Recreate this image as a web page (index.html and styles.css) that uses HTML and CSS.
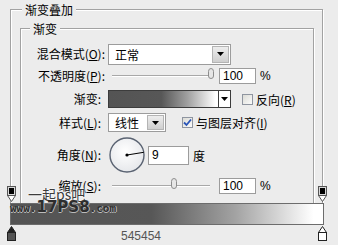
FILE: index.html
```html
<!DOCTYPE html>
<html lang="zh-CN">
  <head>
    <meta charset="utf-8" />
    <title>渐变叠加</title>
    <link rel="stylesheet" href="styles.css">
  </head>
  <body>
    <fieldset class="outer">
      <legend>渐变叠加</legend>
      <fieldset class="inner">
        <legend>渐变</legend>

        <div class="row r-blend">
          <span class="label">混合模式(<u>O</u>):</span>
          <div class="select blend">
            <span class="sel-text">正常</span>
            <span class="drop"><svg width="7" height="4" viewBox="0 0 7 4"><path d="M0 0H7L3.5 4Z" fill="#000"/></svg></span>
          </div>
        </div>

        <div class="row r-opacity">
          <span class="label">不透明度(<u>P</u>):</span>
          <div class="slider">
            <span class="track"></span>
            <span class="knob" style="left: 95px"><svg width="8" height="11" viewBox="0 0 8 11"><path d="M1.5 3.5Q1.5 0.5 4 0.5Q6.5 0.5 6.5 3.5V8Q6.5 10.5 4 10.5Q1.5 10.5 1.5 8Z" fill="#e6e6e6" stroke="#8c8c8c"/></svg></span>
          </div>
          <span class="num">100</span>
          <span class="unit">%</span>
        </div>

        <div class="row r-grad">
          <span class="label short">渐变:</span>
          <div class="grad-pick">
            <span class="grad-fill"></span>
            <span class="grad-drop"><svg width="7" height="4" viewBox="0 0 7 4"><path d="M0 0H7L3.5 4Z" fill="#000"/></svg></span>
          </div>
          <span class="check"></span>
          <span class="check-text">反向(<u>R</u>)</span>
        </div>

        <div class="row r-style">
          <span class="label short">样式(<u>L</u>):</span>
          <div class="select style">
            <span class="sel-text">线性</span>
            <span class="drop"><svg width="7" height="4" viewBox="0 0 7 4"><path d="M0 0H7L3.5 4Z" fill="#000"/></svg></span>
          </div>
          <span class="check on"><svg width="9" height="9" viewBox="0 0 9 9"><path d="M1 4.5L3.5 7L8 1.5" fill="none" stroke="#2a55b8" stroke-width="1.8"/></svg></span>
          <span class="check-text">与图层对齐(<u>I</u>)</span>
        </div>

        <div class="row r-angle">
          <span class="label short">角度(<u>N</u>):</span>
          <svg class="dial" width="38" height="38" viewBox="0 0 38 38">
            <defs>
              <radialGradient id="dialFill" cx="0.45" cy="0.4" r="0.7">
                <stop offset="0" stop-color="#ffffff"/>
                <stop offset="1" stop-color="#e2e4e8"/>
              </radialGradient>
            </defs>
            <circle cx="19" cy="19" r="17" fill="url(#dialFill)" stroke="#5a6372" stroke-width="1.4"/>
            <line x1="19" y1="19" x2="35.8" y2="16.3" stroke="#000" stroke-width="1"/>
            <circle cx="19" cy="19" r="1.6" fill="#000"/>
          </svg>
          <span class="num angle">9</span>
          <span class="unit">度</span>
        </div>

        <div class="row r-scale">
          <span class="label short">缩放(<u>S</u>):</span>
          <div class="slider">
            <span class="track"></span>
            <span class="knob" style="left: 58px"><svg width="8" height="11" viewBox="0 0 8 11"><path d="M1.5 3.5Q1.5 0.5 4 0.5Q6.5 0.5 6.5 3.5V8Q6.5 10.5 4 10.5Q1.5 10.5 1.5 8Z" fill="#e6e6e6" stroke="#8c8c8c"/></svg></span>
          </div>
          <span class="num">100</span>
          <span class="unit">%</span>
        </div>
      </fieldset>
    </fieldset>

    <div class="editor">
      <div class="stops top">
        <svg width="9" height="17" viewBox="0 0 9 17"><rect x="0.5" y="0.5" width="8" height="9" fill="#d8d8d8" stroke="#555"/><rect x="2" y="2" width="5" height="6" fill="#000"/><path d="M0.5 9.5H8.5L4.5 15.5Z" fill="#fff" stroke="#555"/></svg>
        <svg width="9" height="17" viewBox="0 0 9 17"><rect x="0.5" y="0.5" width="8" height="9" fill="#d8d8d8" stroke="#555"/><rect x="2" y="2" width="5" height="6" fill="#000"/><path d="M0.5 9.5H8.5L4.5 15.5Z" fill="#fff" stroke="#555"/></svg>
      </div>
      <div class="bar"></div>
      <div class="stops bottom">
        <svg width="9" height="17" viewBox="0 0 9 17"><path d="M0.5 7.5L4.5 1.5L8.5 7.5Z" fill="#222" stroke="#222"/><rect x="0.5" y="7.5" width="8" height="8" fill="#545454" stroke="#222"/></svg>
        <span class="hex">545454</span>
        <svg width="9" height="17" viewBox="0 0 9 17"><path d="M0.5 7.5L4.5 1.5L8.5 7.5Z" fill="#fff" stroke="#222"/><rect x="0.5" y="7.5" width="8" height="8" fill="#fff" stroke="#222"/></svg>
      </div>
      <div class="mark">一起ps吧</div>
      <div class="mark-url">www.<b>17PS8</b>.com</div>
    </div>
  </body>
</html>
```

FILE: styles.css
```css
html, body {
    margin: 0;
}

body {
    position: relative;
    width: 338px;
    height: 245px;
    overflow: hidden;
    background: #ececec;
    font-family: "Noto Sans CJK SC", sans-serif;
    font-size: 12px;
    color: #000;
}

fieldset {
    margin: 0;
    border: 1px solid #a2a2a2;
    box-shadow: 1px 1px 0 #fff, inset 1px 1px 0 #fff;
    box-sizing: border-box;
}

legend {
    background: #ececec;
    padding: 0 3px;
    line-height: 19px;
    height: 19px;
}

.outer {
    margin-left: 10px;
    width: 313px;
    height: 244px;
    padding: 0 8px 0 9px;
}

.outer > legend {
    margin-left: 2px;
}

.inner {
    height: 224px;
    padding: 5px 0 0 0;
}

.inner > legend {
    margin-left: 9px;
}

.row {
    display: flex;
    align-items: center;
}

.r-blend   { height: 22px; }
.r-opacity { height: 19px; margin-top: 1px; }
.r-grad    { height: 18px; margin-top: 5px; }
.r-style   { height: 19px; margin-top: 5px; }
.r-angle   { height: 38px; margin-top: 4px; }
.r-scale   { height: 19px; margin-top: 2px; }

.label {
    width: 84px;
    padding-right: 3px;
    text-align: right;
    white-space: nowrap;
    line-height: 14px;
}

.label.short {
    width: 80px;
    padding-right: 7px;
}

u {
    text-decoration-thickness: 1px;
    text-underline-offset: 1px;
}

.select {
    display: flex;
    height: 21px;
    box-sizing: border-box;
    border: 1px solid #9c9c9c;
    background: #fff;
}

.select.blend { width: 123px; }
.select.style { width: 58px; height: 19px; }

.sel-text {
    flex: 1;
    padding-left: 6px;
    line-height: 19px;
}

.style .sel-text {
    line-height: 17px;
}

.drop {
    display: flex;
    align-items: center;
    justify-content: center;
    width: 15px;
    margin: 1px;
    border: 1px solid #b4b4b4;
    background: linear-gradient(#ededed, #cfcfcf);
}

.slider {
    position: relative;
    width: 100px;
    height: 19px;
    margin-left: 4px;
}

.track {
    position: absolute;
    left: 0;
    right: 2px;
    top: 9px;
    height: 1px;
    background: #a8a8a8;
    border-bottom: 1px solid #fff;
}

.knob {
    position: absolute;
    top: 2px;
    line-height: 0;
}

.num {
    width: 37px;
    height: 16px;
    margin-left: 7px;
    box-sizing: border-box;
    border: 1px solid #9c9c9c;
    background: #fff;
    padding-left: 3px;
    font-family: "Liberation Sans", Arial, sans-serif;
    font-size: 12px;
    line-height: 14px;
}

.num.angle {
    width: 41px;
    height: 19px;
    margin-left: 2px;
    line-height: 17px;
}

.unit {
    margin-left: 4px;
    font-family: "Liberation Sans", "Noto Sans CJK SC", sans-serif;
}

.grad-pick {
    display: flex;
    width: 123px;
    height: 18px;
    box-sizing: border-box;
    border: 1px solid #3c3c3c;
    background: #fff;
}

.grad-fill {
    flex: 1;
    background: linear-gradient(to right, #545454 0%, #575757 48%, #a0a0a0 72%, #fff 98%);
    border-right: 1px solid #3c3c3c;
}

.grad-drop {
    display: flex;
    align-items: center;
    justify-content: center;
    width: 11px;
}

.check {
    display: flex;
    align-items: center;
    justify-content: center;
    width: 11px;
    height: 11px;
    margin-left: 11px;
    box-sizing: border-box;
    border: 1px solid #8f95a0;
    background: linear-gradient(135deg, #dcdcd6, #fbfbfb);
}

.r-style .check {
    margin-left: 16px;
}

.check-text {
    margin-left: 3px;
}

.dial {
    display: block;
}

/* gradient editor strip laid over the bottom of the dialog */
.editor {
    position: absolute;
    left: 0;
    top: 186px;
    width: 338px;
    height: 59px;
}

.stops {
    display: flex;
    align-items: flex-start;
    justify-content: space-between;
    padding: 0 11px 0 7px;
    height: 17px;
}

.stops svg {
    display: block;
}

.stops.bottom {
    height: 20px;
    justify-content: flex-start;
    background: #ececec;
}

.stops.bottom svg:last-child {
    margin-left: auto;
}

.bar {
    margin-left: 10px;
    width: 314px;
    height: 22px;
    box-sizing: border-box;
    border: 1px solid #6c6c6c;
    background: linear-gradient(to right, #545454 0%, #575757 45%, #a3a3a3 72%, #fff 97%);
    box-shadow: -10px 0 0 #ececec, 14px 0 0 #ececec;
}

.hex {
    margin: 5px 0 0 105px;
    font-family: "Liberation Sans", Arial, sans-serif;
    font-size: 12px;
    line-height: 12px;
    color: #555;
}

.mark {
    position: absolute;
    left: 28px;
    top: -2px;
    font-size: 14px;
    line-height: 20px;
    color: #3c3c3c;
    text-shadow: 0 0 2px #fff, 0 0 2px #fff;
}

.mark-url {
    position: absolute;
    left: 10px;
    top: 14px;
    font-family: "DejaVu Sans Mono", monospace;
    font-weight: bold;
    font-size: 11px;
    line-height: 14px;
    color: #2e2e2e;
    text-shadow: 1px 0 0 #bbb, 0 1px 0 #bbb;
}

.mark-url b {
    font-family: "DejaVu Sans", sans-serif;
    font-size: 15px;
}
```
